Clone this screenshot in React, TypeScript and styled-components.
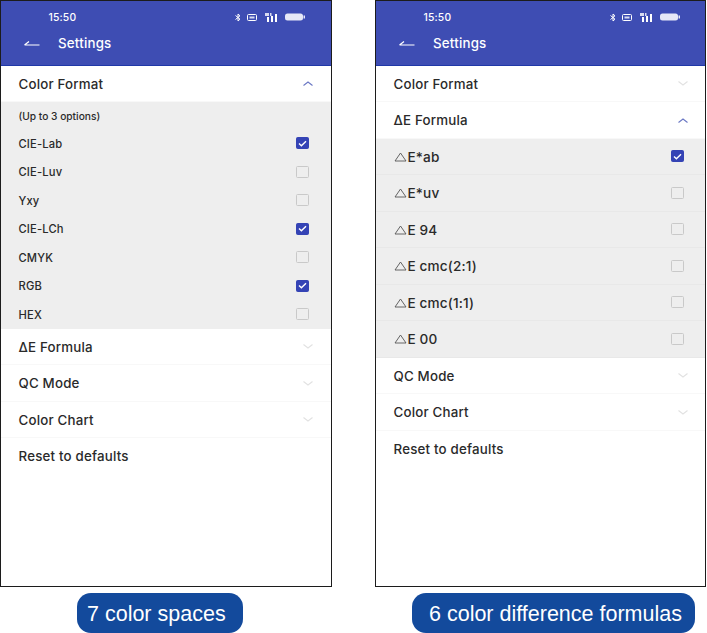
import React from "react";
import styled, { createGlobalStyle } from "styled-components";

const Global = createGlobalStyle`
  html, body { margin: 0; padding: 0; background: #fff; }
  body { width: 707px; height: 633px; overflow: hidden; font-family: "Inter", "Liberation Sans", sans-serif; }
`;
const Page = styled.div`
  display: grid;
  grid-template-columns: 332px 331px;
  column-gap: 43px;
  width: 707px;
`;
const Column = styled.div`
  display: flex;
  flex-direction: column;
  align-items: flex-start;
`;
const Phone = styled.section<{ $inset: number }>`
  --inset: ${p => p.$inset}px;
  box-sizing: border-box;
  width: 100%;
  height: 587px;
  border: 1px solid #1c1c1c;
  background: #fff;
  display: flex;
  flex-direction: column;
`;
const Header = styled.header`
  box-sizing: border-box;
  height: 64.5px;
  flex: none;
  background: #3e4db3;
  border-bottom: 1px solid #2038a8;
  color: #fff;
  display: flex;
  flex-direction: column;
`;
const StatusBar = styled.div`
  height: 31px;
  display: flex;
  align-items: center;
  justify-content: space-between;
  padding: 1px calc(var(--inset) + 9px) 0 47.5px;
  box-sizing: border-box;
`;
const Time = styled.span`
  font-size: 10.3px;
  font-weight: 500;
  letter-spacing: 0.2px;
`;
const StatusIcons = styled.div`
  display: flex;
  align-items: center;
  gap: 6px;
`;
const TitleBar = styled.div`
  display: flex;
  align-items: center;
  gap: 18px;
  padding: 0 0 0 23px;
  height: 22px;
`;
const Title = styled.span`
  font-size: 13.3px;
  font-weight: 450;
  letter-spacing: 0.2px;
`;
const Row = styled.div<{ $last?: boolean }>`
  box-sizing: border-box;
  height: 36.5px;
  flex: none;
  display: flex;
  align-items: center;
  justify-content: space-between;
  padding: 1px var(--inset) 0 17.5px;
  font-size: 13.3px;
  font-weight: 450;
  letter-spacing: 0.2px;
  color: #2a2a2a;
  border-bottom: 1px solid ${p => p.$last ? "transparent" : "#f8f8f8"};
`;
const Panel = styled.div`
  background: #eeeeee;
  flex: none;
  display: flex;
  flex-direction: column;
`;
const Hint = styled.div`
  box-sizing: border-box;
  height: 27px;
  padding: 1px 0 0 17.5px;
  display: flex;
  align-items: center;
  font-size: 10.2px;
  font-weight: 450;
  color: #2a2a2a;
`;
const Option = styled.div<{ $tall?: boolean }>`
  box-sizing: border-box;
  height: ${p => p.$tall ? 36.5 : 28.5}px;
  display: flex;
  align-items: center;
  justify-content: space-between;
  padding: ${p => p.$tall ? 1 : 1}px calc(var(--inset) + 5px) 0 17.5px;
  font-size: ${p => p.$tall ? 13.6 : 11.2}px;
  font-weight: 450;
  letter-spacing: 0.15px;
  color: #2a2a2a;
  border-bottom: ${p => p.$tall ? "1px solid #e8e8e8" : "none"};
`;
const OptionLabel = styled.span`
  display: flex;
  align-items: center;
  gap: 1px;
`;
const Box = styled.span<{ $on?: boolean }>`
  box-sizing: border-box;
  width: 13px;
  height: 12px;
  margin-top: -1px;
  border-radius: 1.5px;
  display: flex;
  align-items: center;
  justify-content: center;
  background: ${p => p.$on ? "#3443b5" : "transparent"};
  border: 1px solid ${p => p.$on ? "#3443b5" : "#c9c9c9"};
`;
const Pill = styled.div<{ $offset: number; $width: number; $pad: number }>`
  margin-top: 6px;
  margin-left: ${p => p.$offset}px;
  width: ${p => p.$width}px;
  height: 40px;
  box-sizing: border-box;
  border-radius: 14px;
  background: #134a9c;
  color: #fff;
  display: flex;
  align-items: center;
  padding: 2px 0 0 ${p => p.$pad}px;
  font-family: "Liberation Sans", Arial, sans-serif;
  font-size: 21.5px;
  white-space: nowrap;
`;

const Chevron = ({ open }: { open?: boolean }) => (
  <svg width="12" height="7" viewBox="0 0 12 7" fill="none" stroke={open ? "#6b78c4" : "#e2e2e2"} strokeWidth="1.1">
    <path d={open ? "M1.5 5.5 6 2l4.5 3.5" : "M1.5 1.5 6 5l4.5-3.5"} />
  </svg>
);
const Tick = () => (
  <svg width="9" height="7" viewBox="0 0 9 7" fill="none" stroke="#fff" strokeWidth="1.4">
    <path d="M1 3.5 3.4 5.8 8 1.2" />
  </svg>
);
const Delta = () => (
  <svg width="13" height="10" viewBox="0 0 13 10" fill="none" stroke="#555" strokeWidth="0.9">
    <path d="M6.5 1 12 9H1Z" />
  </svg>
);
const Back = () => (
  <svg width="16" height="7" viewBox="0 0 16 7" fill="none" stroke="#fff" strokeWidth="1.2">
    <path d="M0.5 5H15.5M0.5 5 5 1.5" />
  </svg>
);
const Status = () => (
  <StatusIcons>
    <svg width="6" height="9" viewBox="0 0 6 9" fill="none" stroke="#fff" strokeWidth="1">
      <path d="M0.5 2.5 5 6.2 3 8V1l2 1.8L0.5 6.5" />
    </svg>
    <svg width="10" height="7" viewBox="0 0 10 7">
      <rect x="0.5" y="0.5" width="9" height="6" rx="1" fill="none" stroke="#fff" />
      <rect x="2.5" y="2.5" width="5" height="2" fill="#d8dcf2" />
    </svg>
    <svg width="16" height="9" viewBox="-2 0 16 9" fill="#fff">
      <rect x="0" y="0" width="4" height="3" opacity="0.8" />
      <rect x="5" y="0" width="1.5" height="3" opacity="0.8" />
      <rect x="2" y="4" width="2" height="5" />
      <rect x="6" y="3" width="2" height="6" />
      <rect x="10" y="1" width="2" height="8" />
    </svg>
    <svg width="20" height="8" viewBox="0 0 20 8">
      <rect x="0" y="0.5" width="18" height="7" rx="2.5" fill="#e6e8f7" />
      <rect x="18.5" y="2.5" width="1.5" height="3" fill="#e6e8f7" />
    </svg>
  </StatusIcons>
);
const Top = () => (
  <Header>
    <StatusBar><Time>15:50</Time><Status /></StatusBar>
    <TitleBar><Back /><Title>Settings</Title></TitleBar>
  </Header>
);
const Check = ({ on }: { on?: boolean }) => <Box $on={on}>{on && <Tick />}</Box>;

const spaces: [string, boolean][] = [
  ["CIE-Lab", true], ["CIE-Luv", false], ["Yxy", false], ["CIE-LCh", true],
  ["CMYK", false], ["RGB", true], ["HEX", false],
];
const formulas: [string, boolean][] = [
  ["E*ab", true], ["E*uv", false], ["E 94", false], ["E cmc(2:1)", false], ["E cmc(1:1)", false], ["E 00", false],
];

export default function App() {
  return (
    <Page>
      <Global />
      <Column>
        <Phone $inset={17}>
          <Top />
          <Row>Color Format<Chevron open /></Row>
          <Panel>
            <Hint>(Up to 3 options)</Hint>
            {spaces.map(([n, on]) => <Option key={n}>{n}<Check on={on} /></Option>)}
          </Panel>
          <Row>ΔE Formula<Chevron /></Row>
          <Row>QC Mode<Chevron /></Row>
          <Row>Color Chart<Chevron /></Row>
          <Row $last>Reset to defaults</Row>
        </Phone>
        <Pill $offset={77} $width={166} $pad={10}>7 color spaces</Pill>
      </Column>
      <Column>
        <Phone $inset={16}>
          <Top />
          <Row>Color Format<Chevron /></Row>
          <Row>ΔE Formula<Chevron open /></Row>
          <Panel>
            {formulas.map(([n, on]) => (
              <Option key={n} $tall>
                <OptionLabel><Delta />{n}</OptionLabel><Check on={on} />
              </Option>
            ))}
          </Panel>
          <Row>QC Mode<Chevron /></Row>
          <Row>Color Chart<Chevron /></Row>
          <Row $last>Reset to defaults</Row>
        </Phone>
        <Pill $offset={37} $width={283} $pad={17}>6 color difference formulas</Pill>
      </Column>
    </Page>
  );
}
